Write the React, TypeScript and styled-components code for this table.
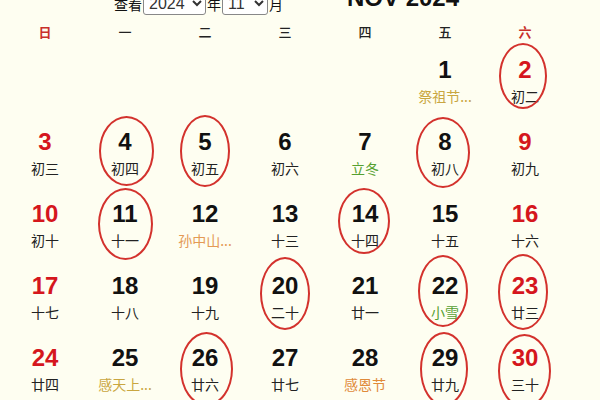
import React from "react";
import styled, { createGlobalStyle } from "styled-components";

const Global = createGlobalStyle`
  html, body { margin: 0; padding: 0; background: #fefef1; overflow: hidden; }
  body { font-family: "Liberation Sans", "Noto Sans CJK SC", sans-serif; color: #111; }
`;

const Page = styled.div`
  width: 600px;
  height: 400px;
  overflow: hidden;
  background: #fefef1;
`;

const TopBar = styled.div`
  display: flex;
  align-items: stretch;
  height: 34px;
  margin-top: -17px;
  padding-left: 114px;
`;

const Picker = styled.div`
  display: flex;
  align-items: flex-end;
`;

const Label = styled.span`
  font-family: "Noto Sans CJK SC", sans-serif;
  font-size: 14px;
  line-height: 16px;
  color: #111;
  margin-bottom: 5px;
`;

const MonthSelect = styled.select<{ $w: number }>`
  width: ${(p) => p.$w}px;
  height: 24px;
  font-family: "Liberation Sans", sans-serif;
  font-size: 16px;
  color: #333;
  background: #fff;
  border: 1px solid #888;
  border-radius: 3px;
  padding: 0 1px;
  margin: 0 1px 2px;
`;

const Title = styled.div`
  margin-left: 64px;
  margin-top: 1px;
  font-family: "Liberation Sans", sans-serif;
  font-weight: bold;
  font-size: 24px;
  line-height: 28px;
  color: #111;
`;

const HeadRow = styled.div`
  display: grid;
  grid-template-columns: repeat(7, 80px);
  height: 28px;
  padding-left: 5px;
`;

const WeekDay = styled.div<{ $red?: boolean }>`
  display: flex;
  align-items: center;
  justify-content: center;
  font-family: "Noto Sans CJK SC", sans-serif;
  font-size: 13px;
  font-weight: ${(p) => (p.$red ? 700 : 500)};
  color: ${(p) => (p.$red ? "#c8302a" : "#222")};
`;

const Grid = styled.div`
  display: grid;
  grid-template-columns: repeat(7, 80px);
  grid-auto-rows: 72px;
  padding-left: 5px;
`;

const Cell = styled.div`
  position: relative;
  display: flex;
  flex-direction: column;
  align-items: center;
  justify-content: center;
  gap: 4px;
`;

const DayNum = styled.div<{ $red?: boolean }>`
  font-family: "Liberation Sans", sans-serif;
  font-weight: bold;
  font-size: 24px;
  line-height: 26px;
  color: ${(p) => (p.$red ? "#d5161d" : "#111")};
`;

const Lunar = styled.div<{ $color: string }>`
  font-family: "Noto Sans CJK SC", sans-serif;
  font-size: 14px;
  line-height: 18px;
  color: ${(p) => p.$color};
  white-space: nowrap;
`;

const Ring = styled.div<{ $w: number; $h: number; $dx: number; $dy: number }>`
  position: absolute;
  left: calc(50% - ${(p) => p.$w / 2 - p.$dx}px);
  top: calc(50% - ${(p) => p.$h / 2 - p.$dy}px);
  width: ${(p) => p.$w}px;
  height: ${(p) => p.$h}px;
  border: 2.5px solid #d3322d;
  border-radius: 50%;
  box-sizing: border-box;
  pointer-events: none;
`;

type Day = {
  n: number;
  l: string;
  red?: boolean;
  c?: string;
  ring?: [number, number, number, number];
};

const BLACK = "#222";
const GOLD = "#c9a640";
const ORANGE = "#e49a55";
const GREEN = "#55a030";

const days: (Day | null)[] = [
  null, null, null, null, null,
  { n: 1, l: "祭祖节...", c: GOLD },
  { n: 2, l: "初二", red: true, ring: [48, 66, -2, -5] },
  { n: 3, l: "初三", red: true },
  { n: 4, l: "初四", ring: [55, 70, 1, -2] },
  { n: 5, l: "初五", ring: [50, 72, 0, -2] },
  { n: 6, l: "初六" },
  { n: 7, l: "立冬", c: GREEN },
  { n: 8, l: "初八", ring: [54, 71, -2, -1] },
  { n: 9, l: "初九", red: true },
  { n: 10, l: "初十", red: true },
  { n: 11, l: "十一", ring: [55, 72, 0, -1] },
  { n: 12, l: "孙中山...", c: ORANGE },
  { n: 13, l: "十三" },
  { n: 14, l: "十四", ring: [52, 66, -1, -4] },
  { n: 15, l: "十五" },
  { n: 16, l: "十六", red: true },
  { n: 17, l: "十七", red: true },
  { n: 18, l: "十八" },
  { n: 19, l: "十九" },
  { n: 20, l: "二十", ring: [50, 73, 0, -4] },
  { n: 21, l: "廿一" },
  { n: 22, l: "小雪", c: GREEN, ring: [50, 72, -2, -6] },
  { n: 23, l: "廿三", red: true, ring: [50, 76, -2, -5] },
  { n: 24, l: "廿四", red: true },
  { n: 25, l: "感天上...", c: GOLD },
  { n: 26, l: "廿六", ring: [53, 74, 1, 0] },
  { n: 27, l: "廿七" },
  { n: 28, l: "感恩节", c: "#e08a3a" },
  { n: 29, l: "廿九", ring: [48, 74, -1, 0] },
  { n: 30, l: "三十", red: true, ring: [53, 74, -1, 2] },
];

const weekdays = ["日", "一", "二", "三", "四", "五", "六"];

export default function App() {
  return (
    <Page>
      <Global />
      <TopBar>
        <Picker>
          <Label>查看</Label>
          <MonthSelect $w={63} defaultValue="2024">
            <option value="2024">2024</option>
          </MonthSelect>
          <Label>年</Label>
          <MonthSelect $w={46} defaultValue="11">
            <option value="11">11</option>
          </MonthSelect>
          <Label>月</Label>
        </Picker>
        <Title>NOV 2024</Title>
      </TopBar>
      <HeadRow>
        {weekdays.map((w, i) => (
          <WeekDay key={w} $red={i === 0 || i === 6}>
            {w}
          </WeekDay>
        ))}
      </HeadRow>
      <Grid>
        {days.map((d, i) =>
          d ? (
            <Cell key={i}>
              <DayNum $red={d.red}>{d.n}</DayNum>
              <Lunar $color={d.c ?? BLACK}>{d.l}</Lunar>
              {d.ring && (
                <Ring $w={d.ring[0]} $h={d.ring[1]} $dx={d.ring[2]} $dy={d.ring[3]} />
              )}
            </Cell>
          ) : (
            <Cell key={i} />
          )
        )}
      </Grid>
    </Page>
  );
}
